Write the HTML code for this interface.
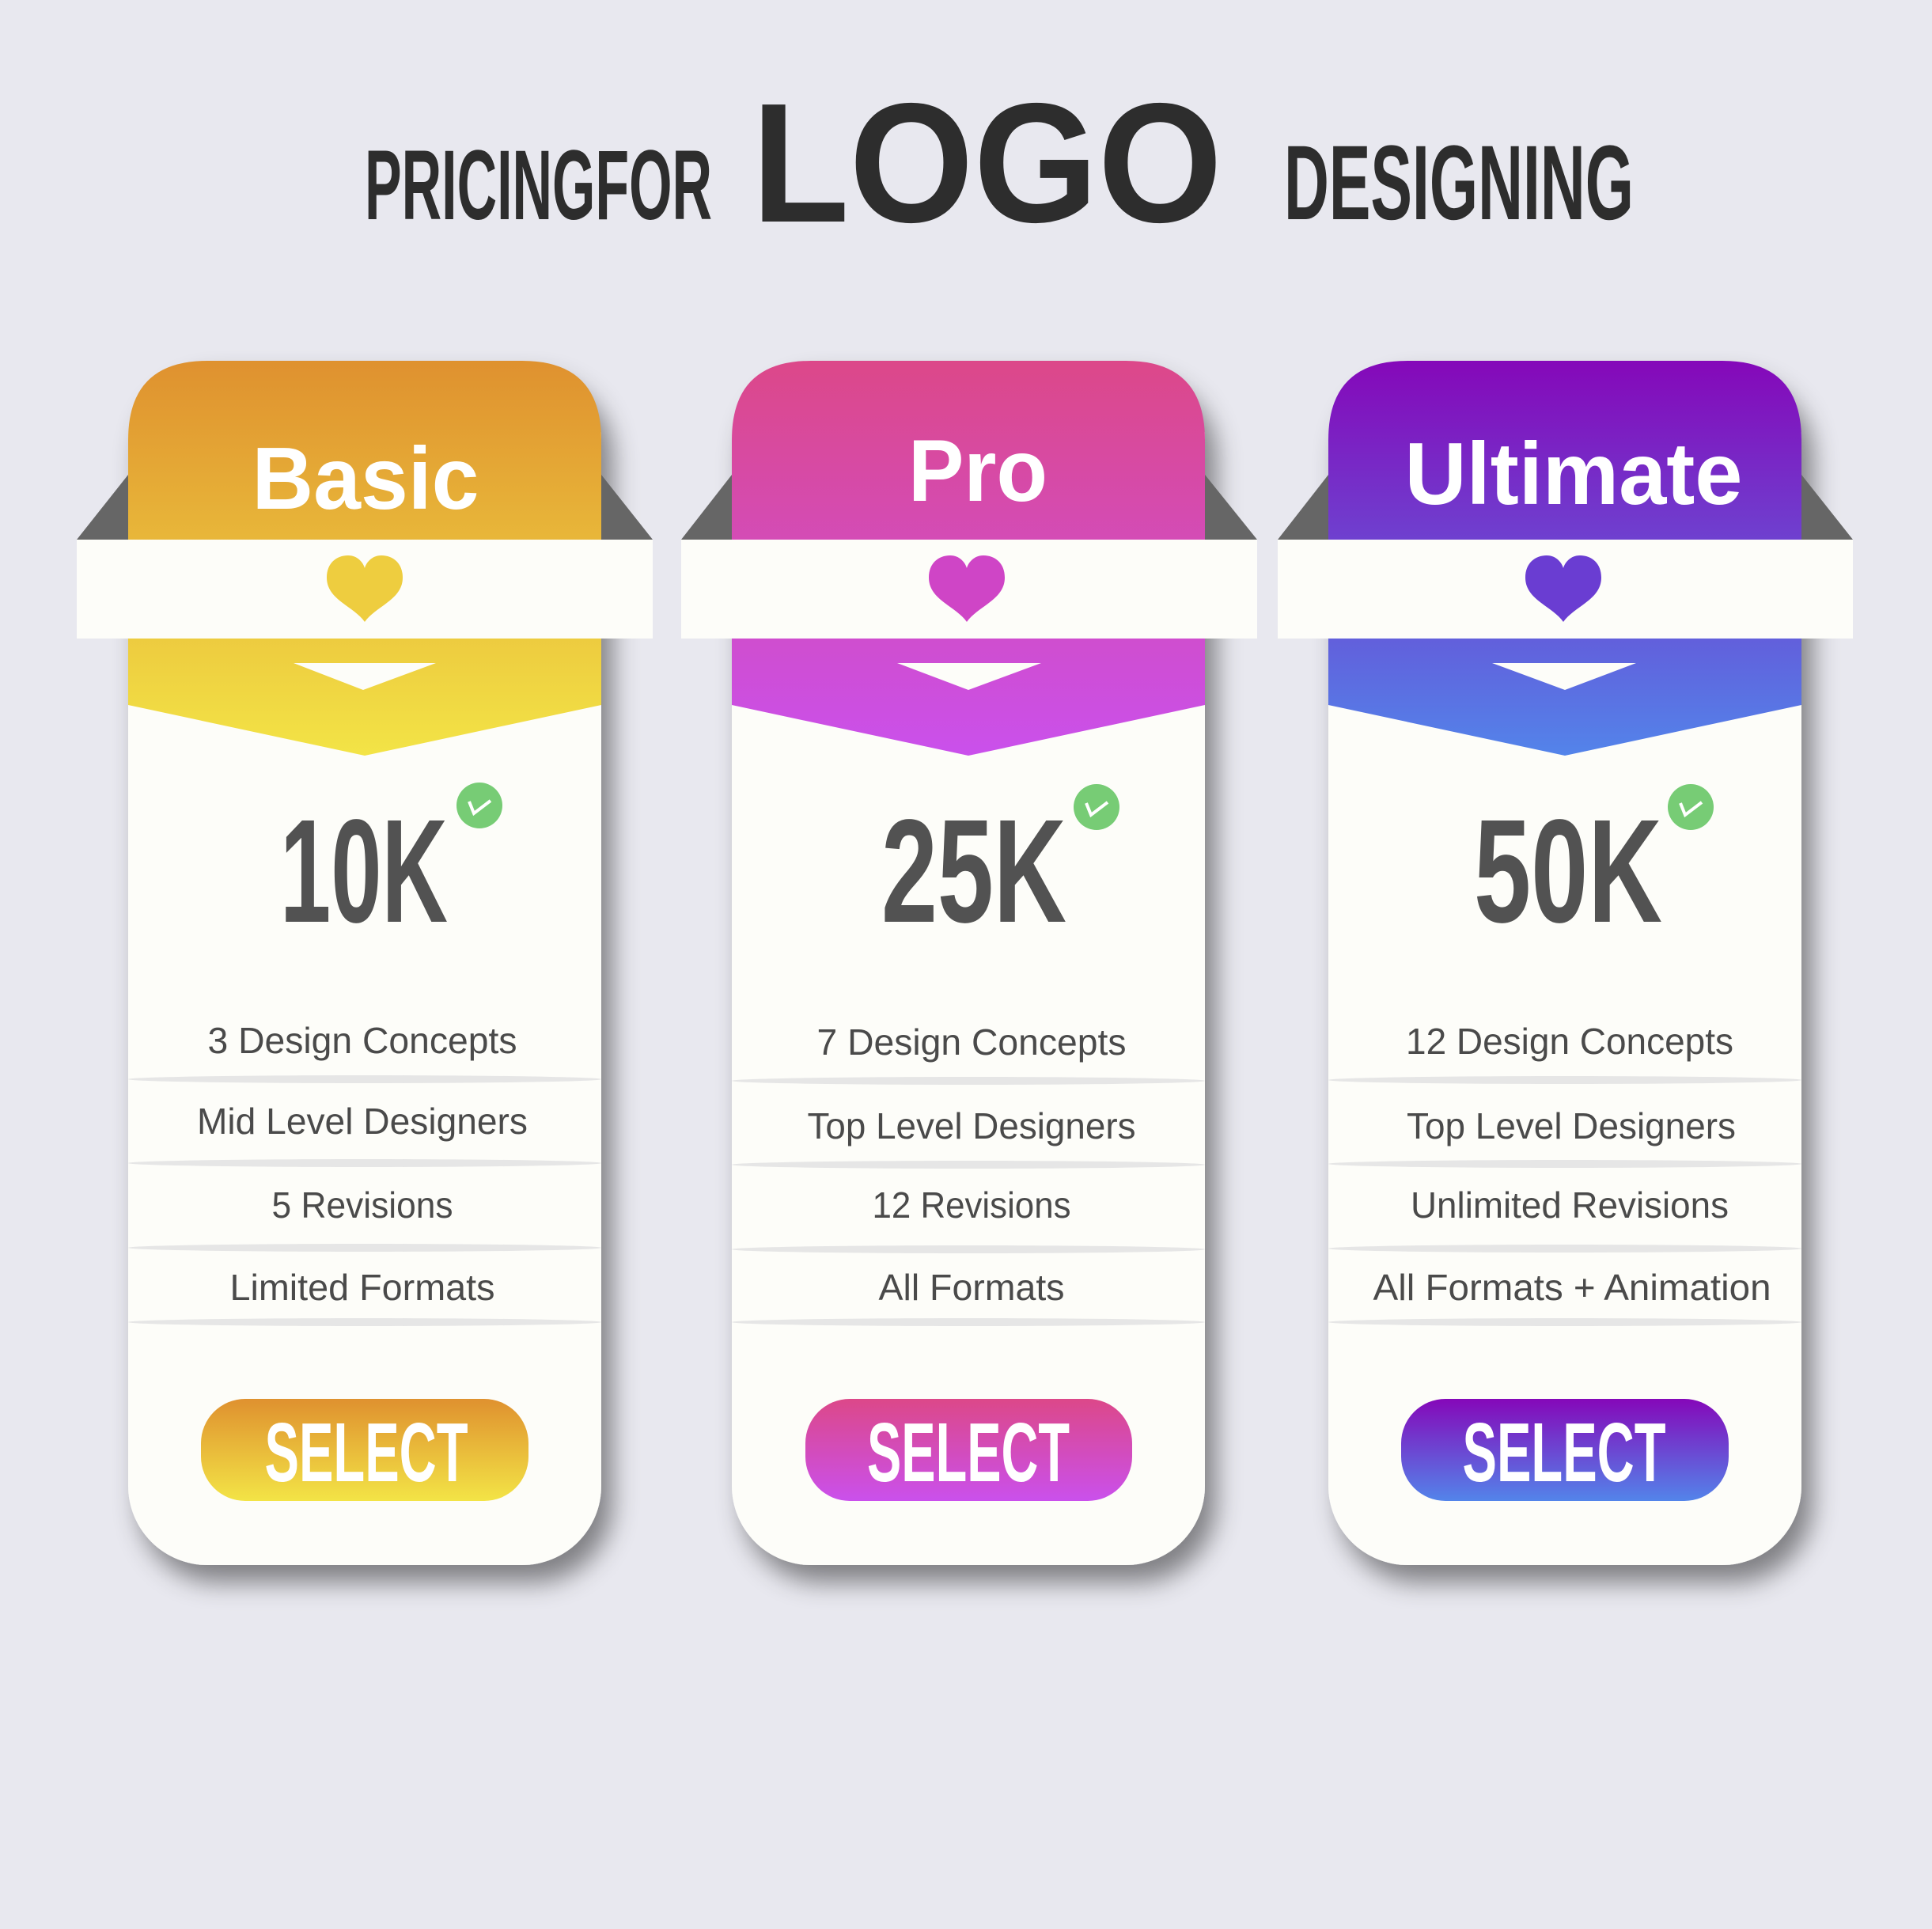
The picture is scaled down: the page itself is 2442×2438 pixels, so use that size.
<!DOCTYPE html>
<html><head><meta charset="utf-8"><style>html,body{margin:0;padding:0;background:#e8e8ef}svg{display:block}</style></head><body>
<svg width="2442" height="2438" viewBox="0 0 2442 2438" xmlns="http://www.w3.org/2000/svg">
<defs>
<filter id="sh" x="-20%" y="-10%" width="150%" height="130%">
<feDropShadow dx="14" dy="22" stdDeviation="16" flood-color="#000" flood-opacity="0.45"/>
</filter>
<linearGradient id="g1" x1="0" y1="0" x2="0" y2="1"><stop offset="0" stop-color="#df912f"/><stop offset="1" stop-color="#f3e446"/></linearGradient>
<linearGradient id="g2" x1="0" y1="0" x2="0" y2="1"><stop offset="0" stop-color="#dc4889"/><stop offset="1" stop-color="#ca50ec"/></linearGradient>
<linearGradient id="g3" x1="0" y1="0" x2="0" y2="1"><stop offset="0" stop-color="#8508b9"/><stop offset="1" stop-color="#5384ea"/></linearGradient>
</defs>
<rect width="2442" height="2438" fill="#e8e8ef"/>
<g font-family="Liberation Sans Narrow, Liberation Sans, sans-serif" font-weight="bold" fill="#2d2d2d">
<text x="461" y="277" font-size="125" textLength="439" lengthAdjust="spacingAndGlyphs">PRICINGFOR</text>
<text x="950" y="280" font-size="215" font-family="Liberation Sans, sans-serif" textLength="595" lengthAdjust="spacingAndGlyphs">LOGO</text>
<text x="1623" y="277" font-size="134" textLength="442" lengthAdjust="spacingAndGlyphs">DESIGNING</text>
</g>

<!-- CARD TEMPLATE -->
<g id="c1">
<rect x="162" y="456" width="598" height="1522" rx="100" fill="#fdfdf9" filter="url(#sh)"/>
<polygon points="97,682 162,600 162,682" fill="#666"/>
<polygon points="825,682 760,600 760,682" fill="#666"/>
<path d="M162,556 Q162,456 262,456 L660,456 Q760,456 760,556 L760,891 L461,955 L162,891 Z" fill="url(#g1)"/>
<rect x="97" y="682" width="728" height="125" fill="#fdfdf9"/>
<path transform="translate(413,702)" d="M48,84 C34,64 0,56 0,28 C0,10 12,0 27,0 C39,0 46,9 48,16 C50,9 57,0 69,0 C84,0 96,10 96,28 C96,56 62,64 48,84 Z" fill="#eecd3f"/>
<polygon points="371,838 551,838 459,872" fill="#fdfdf9"/>
<text x="462" y="643" font-family="Liberation Sans, sans-serif" font-weight="bold" font-size="111" fill="#fff" text-anchor="middle" textLength="287" lengthAdjust="spacingAndGlyphs">Basic</text>
<text x="460" y="1165" font-family="Liberation Sans Narrow, Liberation Sans, sans-serif" font-weight="bold" font-size="186" fill="#525252" text-anchor="middle" textLength="212" lengthAdjust="spacingAndGlyphs">10K</text>
<circle cx="606" cy="1018" r="29" fill="#77cc75"/>
<path d="M593,1013 L599,1028 L620,1012" stroke="#fff" stroke-width="4" fill="none"/>
<g font-family="Liberation Sans, sans-serif" font-size="46" fill="#4a4a4a" text-anchor="middle">
<text x="458" y="1331" textLength="391" lengthAdjust="spacingAndGlyphs">3 Design Concepts</text>
<text x="458" y="1433" textLength="418" lengthAdjust="spacingAndGlyphs">Mid Level Designers</text>
<text x="458" y="1539" textLength="229" lengthAdjust="spacingAndGlyphs">5 Revisions</text>
<text x="458" y="1643" textLength="335" lengthAdjust="spacingAndGlyphs">Limited Formats</text>
</g>
<g fill="#e6e6e6"><ellipse cx="461" cy="1364" rx="299" ry="5"/><ellipse cx="461" cy="1470" rx="299" ry="5"/><ellipse cx="461" cy="1577" rx="299" ry="5"/><ellipse cx="461" cy="1671" rx="299" ry="5"/></g>
<rect x="254" y="1768" width="414" height="129" rx="56" fill="url(#g1)"/>
<text x="463" y="1872" font-family="Liberation Sans Narrow, Liberation Sans, sans-serif" font-weight="bold" font-size="106" fill="#fff" text-anchor="middle" textLength="257" lengthAdjust="spacingAndGlyphs">SELECT</text>
</g>

<g>
<rect x="925" y="456" width="598" height="1522" rx="100" fill="#fdfdf9" filter="url(#sh)"/>
<polygon points="861,682 925,600 925,682" fill="#666"/>
<polygon points="1589,682 1523,600 1523,682" fill="#666"/>
<path d="M925,556 Q925,456 1025,456 L1423,456 Q1523,456 1523,556 L1523,891 L1224,955 L925,891 Z" fill="url(#g2)"/>
<rect x="861" y="682" width="728" height="125" fill="#fdfdf9"/>
<path transform="translate(1174,702)" d="M48,84 C34,64 0,56 0,28 C0,10 12,0 27,0 C39,0 46,9 48,16 C50,9 57,0 69,0 C84,0 96,10 96,28 C96,56 62,64 48,84 Z" fill="#cf45c6"/>
<polygon points="1134,838 1316,838 1224,872" fill="#fdfdf9"/>
<text x="1236" y="633" font-family="Liberation Sans, sans-serif" font-weight="bold" font-size="111" fill="#fff" text-anchor="middle" textLength="176" lengthAdjust="spacingAndGlyphs">Pro</text>
<text x="1231" y="1165" font-family="Liberation Sans Narrow, Liberation Sans, sans-serif" font-weight="bold" font-size="186" fill="#525252" text-anchor="middle" textLength="234" lengthAdjust="spacingAndGlyphs">25K</text>
<circle cx="1386" cy="1020" r="29" fill="#77cc75"/>
<path d="M1373,1015 L1379,1030 L1400,1014" stroke="#fff" stroke-width="4" fill="none"/>
<g font-family="Liberation Sans, sans-serif" font-size="46" fill="#4a4a4a" text-anchor="middle">
<text x="1228" y="1333" textLength="391" lengthAdjust="spacingAndGlyphs">7 Design Concepts</text>
<text x="1228" y="1439" textLength="415" lengthAdjust="spacingAndGlyphs">Top Level Designers</text>
<text x="1228" y="1539" textLength="251" lengthAdjust="spacingAndGlyphs">12 Revisions</text>
<text x="1228" y="1643" textLength="235" lengthAdjust="spacingAndGlyphs">All Formats</text>
</g>
<g fill="#e6e6e6"><ellipse cx="1224" cy="1366" rx="299" ry="5"/><ellipse cx="1224" cy="1472" rx="299" ry="5"/><ellipse cx="1224" cy="1579" rx="299" ry="5"/><ellipse cx="1224" cy="1671" rx="299" ry="5"/></g>
<rect x="1018" y="1768" width="413" height="129" rx="56" fill="url(#g2)"/>
<text x="1224" y="1872" font-family="Liberation Sans Narrow, Liberation Sans, sans-serif" font-weight="bold" font-size="106" fill="#fff" text-anchor="middle" textLength="256" lengthAdjust="spacingAndGlyphs">SELECT</text>
</g>

<g>
<rect x="1679" y="456" width="598" height="1522" rx="100" fill="#fdfdf9" filter="url(#sh)"/>
<polygon points="1615,682 1679,600 1679,682" fill="#666"/>
<polygon points="2342,682 2277,600 2277,682" fill="#666"/>
<path d="M1679,556 Q1679,456 1779,456 L2177,456 Q2277,456 2277,556 L2277,891 L1978,955 L1679,891 Z" fill="url(#g3)"/>
<rect x="1615" y="682" width="727" height="125" fill="#fdfdf9"/>
<path transform="translate(1928,702)" d="M48,84 C34,64 0,56 0,28 C0,10 12,0 27,0 C39,0 46,9 48,16 C50,9 57,0 69,0 C84,0 96,10 96,28 C96,56 62,64 48,84 Z" fill="#6a3dd2"/>
<polygon points="1886,838 2068,838 1978,872" fill="#fdfdf9"/>
<text x="1989" y="637" font-family="Liberation Sans, sans-serif" font-weight="bold" font-size="111" fill="#fff" text-anchor="middle" textLength="427" lengthAdjust="spacingAndGlyphs">Ultimate</text>
<text x="1982" y="1165" font-family="Liberation Sans Narrow, Liberation Sans, sans-serif" font-weight="bold" font-size="186" fill="#525252" text-anchor="middle" textLength="238" lengthAdjust="spacingAndGlyphs">50K</text>
<circle cx="2137" cy="1020" r="29" fill="#77cc75"/>
<path d="M2124,1015 L2130,1030 L2151,1014" stroke="#fff" stroke-width="4" fill="none"/>
<g font-family="Liberation Sans, sans-serif" font-size="46" fill="#4a4a4a" text-anchor="middle">
<text x="1984" y="1332" textLength="414" lengthAdjust="spacingAndGlyphs">12 Design Concepts</text>
<text x="1986" y="1439" textLength="416" lengthAdjust="spacingAndGlyphs">Top Level Designers</text>
<text x="1984" y="1539" textLength="402" lengthAdjust="spacingAndGlyphs">Unlimited Revisions</text>
<text x="1987" y="1643" textLength="503" lengthAdjust="spacingAndGlyphs">All Formats + Animation</text>
</g>
<g fill="#e6e6e6"><ellipse cx="1978" cy="1365" rx="299" ry="5"/><ellipse cx="1978" cy="1471" rx="299" ry="5"/><ellipse cx="1978" cy="1578" rx="299" ry="5"/><ellipse cx="1978" cy="1671" rx="299" ry="5"/></g>
<rect x="1771" y="1768" width="414" height="129" rx="56" fill="url(#g3)"/>
<text x="1977" y="1872" font-family="Liberation Sans Narrow, Liberation Sans, sans-serif" font-weight="bold" font-size="106" fill="#fff" text-anchor="middle" textLength="257" lengthAdjust="spacingAndGlyphs">SELECT</text>
</g>
</svg>
</body></html>
